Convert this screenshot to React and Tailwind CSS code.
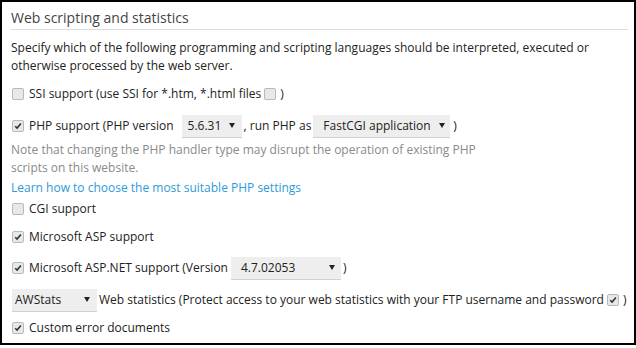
import React from "react";

function Check({ checked, className = "" }) {
  return (
    <span
      className={
        "inline-flex w-[12px] h-[12px] rounded-[2px] border border-[#b9b9b9] bg-[#e8e8e8] items-center justify-center shrink-0 " +
        className
      }
    >
      {checked && (
        <svg width="8" height="8" viewBox="0 0 8 8">
          <path d="M1.2 4.2 L3.1 6.1 L6.9 1.6" stroke="#333" strokeWidth="1.6" fill="none" />
        </svg>
      )}
    </span>
  );
}

function Arrow() {
  return (
    <svg width="6" height="5" viewBox="0 0 6 5" className="shrink-0">
      <path d="M0 0 H6 L3 5 Z" fill="#222" />
    </svg>
  );
}

function Select({ value, className }) {
  return (
    <span
      className={
        "inline-flex items-center justify-between h-[23px] bg-[#eeeeee] border-b border-[#d2d2d2] shrink-0 whitespace-nowrap " +
        className
      }
    >
      <span>{value}</span>
      <Arrow />
    </span>
  );
}

export default function App() {
  return (
    <div
      className="w-[636px] h-[348px] bg-white text-[12px] text-[#222]"
      style={{ fontFamily: '"Open Sans", "Noto Sans", sans-serif' }}
    >
      <div className="w-[636px] h-[345px] border-2 border-black pl-[9px] pr-[6px] flex flex-col whitespace-nowrap">
        <div className="text-[14px] text-[#444] leading-[20px] pt-[6px] pb-[1px] border-b border-[#dcdcdc]">
          Web scripting and statistics
        </div>
        <div className="mt-[9px] leading-[18px]">
          Specify which of the following programming and scripting languages should be interpreted, executed or
          <br />
          otherwise processed by the web server.
        </div>

        <div className="mt-[9px] h-[20px] flex items-center pl-[1px]">
          <Check />
          <span className="ml-[5px]">SSI support (use SSI for *.htm, *.html files</span>
          <Check className="ml-[3px]" />
          <span className="ml-[4px]">)</span>
        </div>

        <div className="mt-[10px] h-[24px] flex items-center pl-[1px]">
          <Check checked />
          <span className="ml-[5px]">PHP support (PHP version</span>
          <Select value="5.6.31" className="ml-[8px] w-[60px] pl-[6px] pr-[7px]" />
          <span className="ml-[2px]">, run PHP as</span>
          <Select value="FastCGI application" className="ml-[2px] w-[137px] pl-[10px] pr-[5px]" />
          <span className="ml-[3px]">)</span>
        </div>

        <div className="mt-[3px] leading-[18px] text-[#8a8a8a]">
          Note that changing the PHP handler type may disrupt the operation of existing PHP
          <br />
          scripts on this website.
        </div>
        <div className="mt-[2px] leading-[18px] text-[#2f9ad8]">
          Learn how to choose the most suitable PHP settings
        </div>

        <div className="mt-[2px] h-[20px] flex items-center pl-[1px]">
          <Check />
          <span className="ml-[5px]">CGI support</span>
        </div>

        <div className="mt-[8px] h-[20px] flex items-center pl-[1px]">
          <Check checked />
          <span className="ml-[5px]">Microsoft ASP support</span>
        </div>

        <div className="mt-[9px] h-[24px] flex items-center pl-[1px]">
          <Check checked />
          <span className="ml-[5px]">Microsoft ASP.NET support (Version</span>
          <Select value="4.7.02053" className="ml-[3px] w-[110px] pl-[10px] pr-[6px]" />
          <span className="ml-[2px]">)</span>
        </div>

        <div className="mt-[8px] h-[24px] flex items-center pl-[1px]">
          <Select value="AWStats" className="w-[85px] pl-[3px] pr-[7px]" />
          <span className="ml-[2px]">
            Web statistics (Protect access to your web statistics with your FTP username and password
          </span>
          <Check checked className="ml-[3px]" />
          <span className="ml-[4px]">)</span>
        </div>

        <div className="mt-[6px] h-[20px] flex items-center pl-[1px]">
          <Check checked />
          <span className="ml-[5px]">Custom error documents</span>
        </div>
      </div>
    </div>
  );
}
